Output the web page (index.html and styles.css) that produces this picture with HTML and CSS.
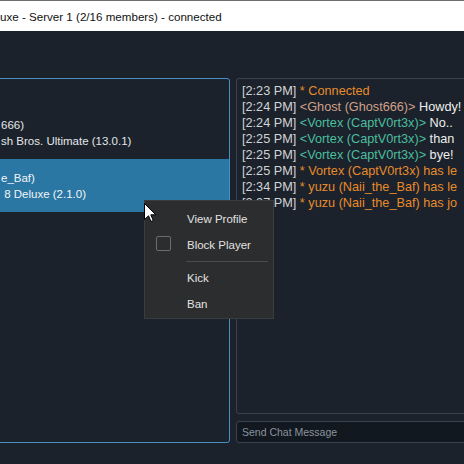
FILE: index.html
```html
<!DOCTYPE html>
<html lang="en">
<head>
<meta charset="utf-8">
<title>Chat Room</title>
<link rel="stylesheet" href="styles.css">
</head>
<body>
<div class="window">
  <header class="titlebar">
    <span class="title">uxe - Server 1 (2/16 members) - connected</span>
  </header>
  <main class="room">
    <section class="members">
      <ul class="member-list">
        <li class="member">
          <span class="nick">666)</span>
          <span class="game">sh Bros. Ultimate (13.0.1)</span>
        </li>
        <li class="member selected">
          <span class="nick">e_Baf)</span>
          <span class="game">&nbsp;8 Deluxe (2.1.0)</span>
        </li>
      </ul>
    </section>
    <section class="chat">
      <div class="chat-log">
        <p class="line"><span class="time">[2:23 PM]</span> <span class="status">* Connected</span></p>
        <p class="line"><span class="time">[2:24 PM]</span> <span class="name tan">&lt;Ghost (Ghost666)&gt;</span> Howdy!</p>
        <p class="line"><span class="time">[2:24 PM]</span> <span class="name teal">&lt;Vortex (CaptV0rt3x)&gt;</span> No..</p>
        <p class="line"><span class="time">[2:25 PM]</span> <span class="name teal">&lt;Vortex (CaptV0rt3x)&gt;</span> than</p>
        <p class="line"><span class="time">[2:25 PM]</span> <span class="name teal">&lt;Vortex (CaptV0rt3x)&gt;</span> bye!</p>
        <p class="line"><span class="time">[2:25 PM]</span> <span class="status">* Vortex (CaptV0rt3x) has le</span></p>
        <p class="line"><span class="time">[2:34 PM]</span> <span class="status">* yuzu (Naii_the_Baf) has le</span></p>
        <p class="line"><span class="time">[2:37 PM]</span> <span class="status">* yuzu (Naii_the_Baf) has jo</span></p>
      </div>
      <input class="chat-input" type="text" placeholder="Send Chat Message">
    </section>
  </main>
</div>

<div class="context-menu">
  <div class="menu-item">View Profile</div>
  <div class="menu-item"><span class="check"></span>Block Player</div>
  <div class="menu-sep"></div>
  <div class="menu-item">Kick</div>
  <div class="menu-item">Ban</div>
</div>

<svg class="cursor" width="13" height="20" viewBox="0 0 13 20" aria-hidden="true">
  <path d="M0.5 0.5 L0.5 16.5 L4.5 12.8 L7 18.5 L9.3 17.5 L6.8 11.8 L11.8 11.8 Z" fill="#ffffff" stroke="#000000" stroke-width="1" stroke-linejoin="miter"/>
</svg>
</body>
</html>
```

FILE: styles.css
```css
html, body {
  margin: 0;
  padding: 0;
  width: 464px;
  height: 464px;
  overflow: hidden;
  background: #1b222b;
  font-family: "Liberation Sans", Arial, sans-serif;
}

.window {
  width: 464px;
  border-top: 1px solid #6e6e6e;
}

.titlebar {
  height: 30px;
  background: #ffffff;
  display: flex;
  align-items: center;
}

.title {
  font-size: 11.6px;
  color: #111111;
  padding-top: 1px;
}

.room {
  display: flex;
  gap: 6px;
  padding-top: 47px;
  height: 365px;
}

.members {
  flex: none;
  width: 240px;
  margin-left: -10px;
  box-sizing: border-box;
  border: 1px solid #4a8fc4;
  border-radius: 3px;
  background: #1b222b;
}

.member-list {
  list-style: none;
  margin: 0;
  padding: 28px 0 0 0;
}

.member {
  height: 52px;
  display: flex;
  flex-direction: column;
  justify-content: center;
  padding-left: 10px;
  color: #e4e6e8;
  font-size: 11.5px;
  line-height: 16px;
  white-space: nowrap;
}

.member.selected {
  background: #2a77a3;
  color: #f2f4f6;
  padding-top: 1px;
}

.chat {
  flex: 1;
  display: flex;
  flex-direction: column;
  gap: 7px;
  margin-right: -20px;
}

.chat-log {
  flex: 1;
  border: 1px solid #39434f;
  border-radius: 3px;
  padding: 4px 0 0 5px;
  font-size: 12.7px;
  line-height: 16px;
  color: #eeeeee;
  white-space: nowrap;
}

.line {
  margin: 0;
}

.time {
  color: #d2d4d6;
}

.status {
  color: #e88b2c;
}

.name.tan {
  color: #cfa08a;
}

.name.teal {
  color: #4bbf9f;
}

.chat-input {
  display: block;
  height: 22px;
  box-sizing: border-box;
  margin: 0;
  background: #111820;
  border: 1px solid #39434f;
  border-radius: 3px;
  padding: 0 0 0 5px;
  font-family: "Liberation Sans", Arial, sans-serif;
  font-size: 10.5px;
  color: #d0d0d0;
  outline: none;
}

.chat-input::placeholder {
  color: #8c939b;
}

.context-menu {
  position: absolute;
  left: 144px;
  top: 200px;
  width: 130px;
  box-sizing: border-box;
  background: #2c2d2f;
  border: 1px solid #3b3c3e;
  padding: 5px 0 1px;
  font-size: 11.5px;
  color: #e2e2e2;
}

.menu-item {
  position: relative;
  height: 26px;
  display: flex;
  align-items: center;
  padding-left: 42px;
}

.check {
  position: absolute;
  left: 11px;
  top: 4px;
  width: 15px;
  height: 15px;
  box-sizing: border-box;
  border: 1px solid #6b6c6e;
  border-radius: 2px;
}

.menu-sep {
  height: 1px;
  background: #4a4b4d;
  margin: 3px 5px 3px 41px;
}

.cursor {
  position: absolute;
  left: 144px;
  top: 203px;
}
```
